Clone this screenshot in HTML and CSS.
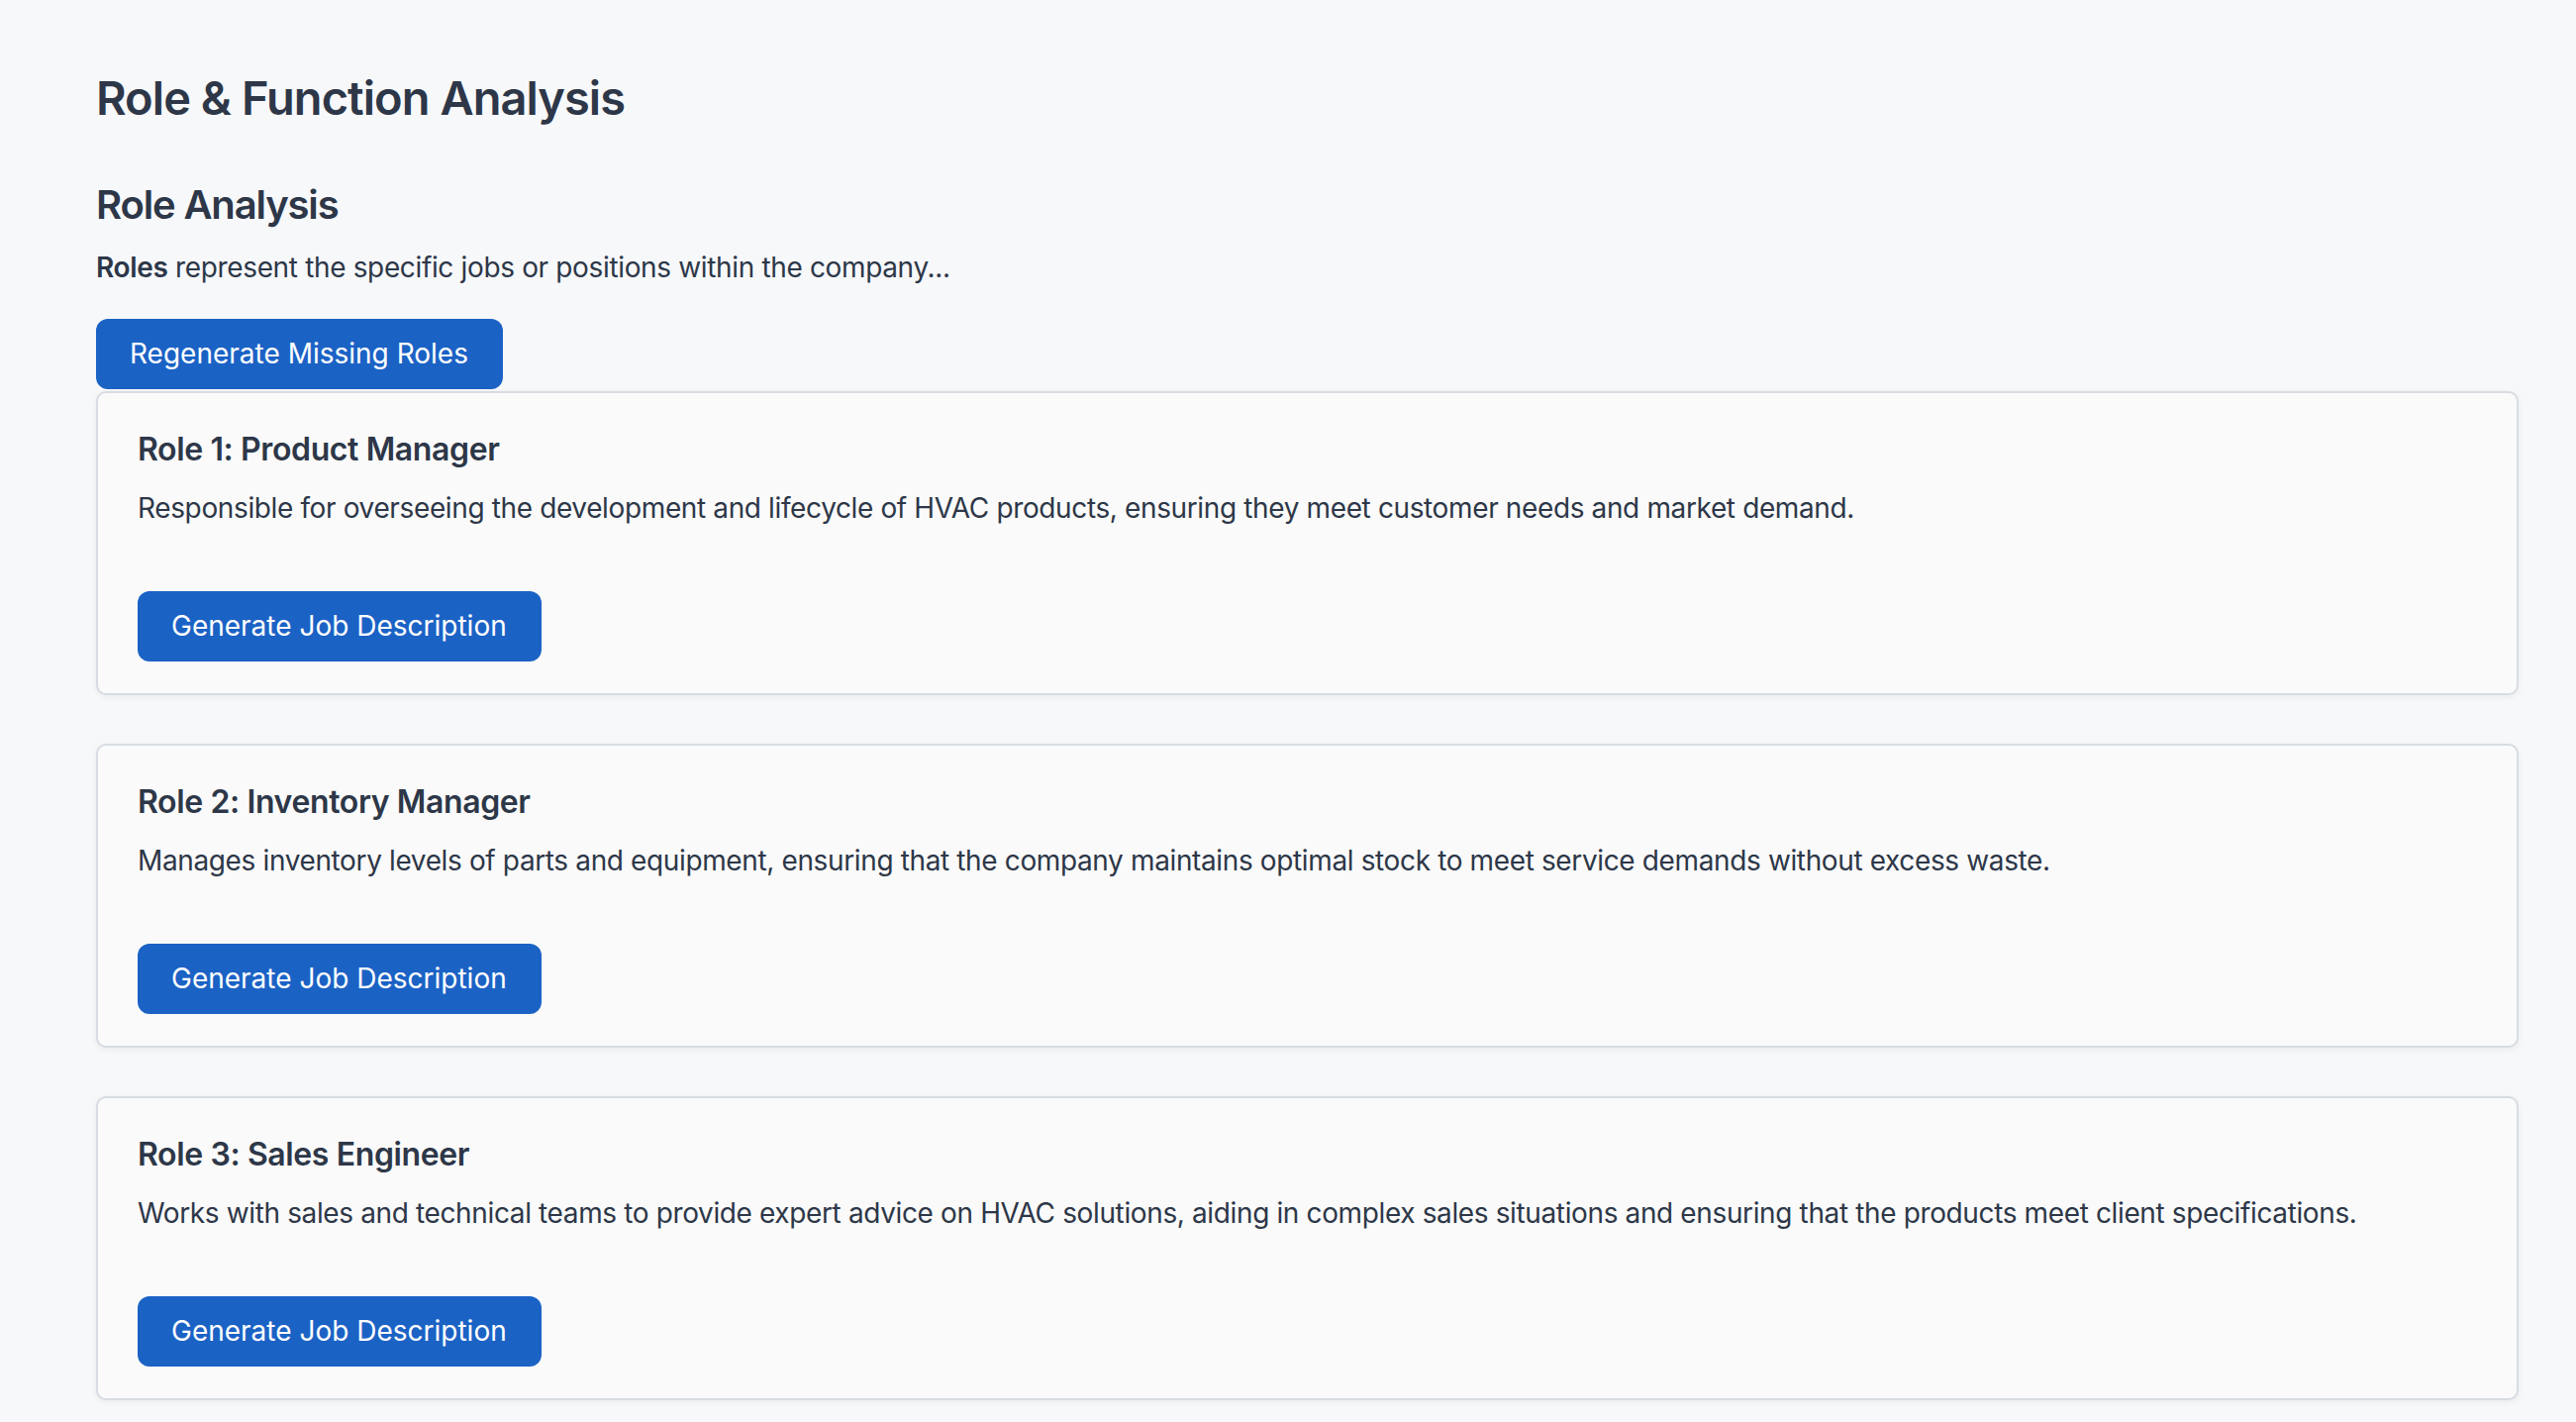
FILE: index.html
```html
<!DOCTYPE html>
<html lang="en">
<head>
<meta charset="utf-8">
<title>Role &amp; Function Analysis</title>
<link rel="stylesheet" href="styles.css">
</head>
<body>
<main class="page">
  <h1 class="page-title">Role &amp; Function Analysis</h1>
  <h2 class="section-title">Role Analysis</h2>
  <p class="intro"><strong>Roles</strong> represent the specific jobs or positions within the company...</p>
  <button class="btn btn-regenerate" type="button">Regenerate Missing Roles</button>

  <section class="role-list">
    <article class="role-card">
      <h3 class="role-title">Role 1: Product Manager</h3>
      <p class="role-desc">Responsible for overseeing the development and lifecycle of HVAC products, ensuring they meet customer needs and market demand.</p>
      <button class="btn btn-generate" type="button">Generate Job Description</button>
    </article>
    <article class="role-card">
      <h3 class="role-title">Role 2: Inventory Manager</h3>
      <p class="role-desc">Manages inventory levels of parts and equipment, ensuring that the company maintains optimal stock to meet service demands without excess waste.</p>
      <button class="btn btn-generate" type="button">Generate Job Description</button>
    </article>
    <article class="role-card">
      <h3 class="role-title">Role 3: Sales Engineer</h3>
      <p class="role-desc">Works with sales and technical teams to provide expert advice on HVAC solutions, aiding in complex sales situations and ensuring that the products meet client specifications.</p>
      <button class="btn btn-generate" type="button">Generate Job Description</button>
    </article>
  </section>
</main>
</body>
</html>
```

FILE: styles.css
```css
* {
  box-sizing: border-box;
}

html, body {
  margin: 0;
  padding: 0;
}

body {
  background: #f7f8fa;
  color: #2d3748;
  font-family: Inter, "Noto Sans", "Liberation Sans", sans-serif;
}

.page {
  padding: 70px 58px 40px 97px;
  display: flex;
  flex-direction: column;
  align-items: flex-start;
}

.page-title {
  margin: 0;
  font-size: 47px;
  line-height: 58px;
  font-weight: 600;
  letter-spacing: -0.95px;
}

.section-title {
  margin: 55px 0 0;
  font-size: 40px;
  line-height: 48px;
  font-weight: 600;
  letter-spacing: -1.15px;
}

.intro {
  margin: 22px 0 0;
  font-size: 28px;
  line-height: 34px;
  letter-spacing: -0.35px;
}

.intro strong {
  font-weight: 600;
}

.btn {
  display: inline-block;
  border: none;
  background: #1b62c5;
  color: #ffffff;
  font-family: inherit;
  font-size: 28px;
  line-height: 35px;
  font-weight: 400;
  padding: 18px 35px 18px 34px;
  border-radius: 12px;
  cursor: pointer;
}

.btn-regenerate {
  margin-top: 35px;
}

.role-list {
  align-self: stretch;
  margin-top: 2px;
  display: flex;
  flex-direction: column;
  gap: 49px;
}

.role-card {
  background: #fafafa;
  border: 2px solid #d8dce2;
  border-radius: 10px;
  box-shadow: 0 2px 6px rgba(20, 30, 50, 0.06);
  padding: 38px 40px 32px 40px;
  display: flex;
  flex-direction: column;
  align-items: flex-start;
}

.role-title {
  margin: 0;
  font-size: 32px;
  line-height: 38px;
  font-weight: 600;
  letter-spacing: -0.38px;
}

.role-desc {
  margin: 23px 0 0;
  font-size: 28px;
  line-height: 34px;
  letter-spacing: -0.37px;
}

.btn-generate {
  margin-top: 67px;
}
```
